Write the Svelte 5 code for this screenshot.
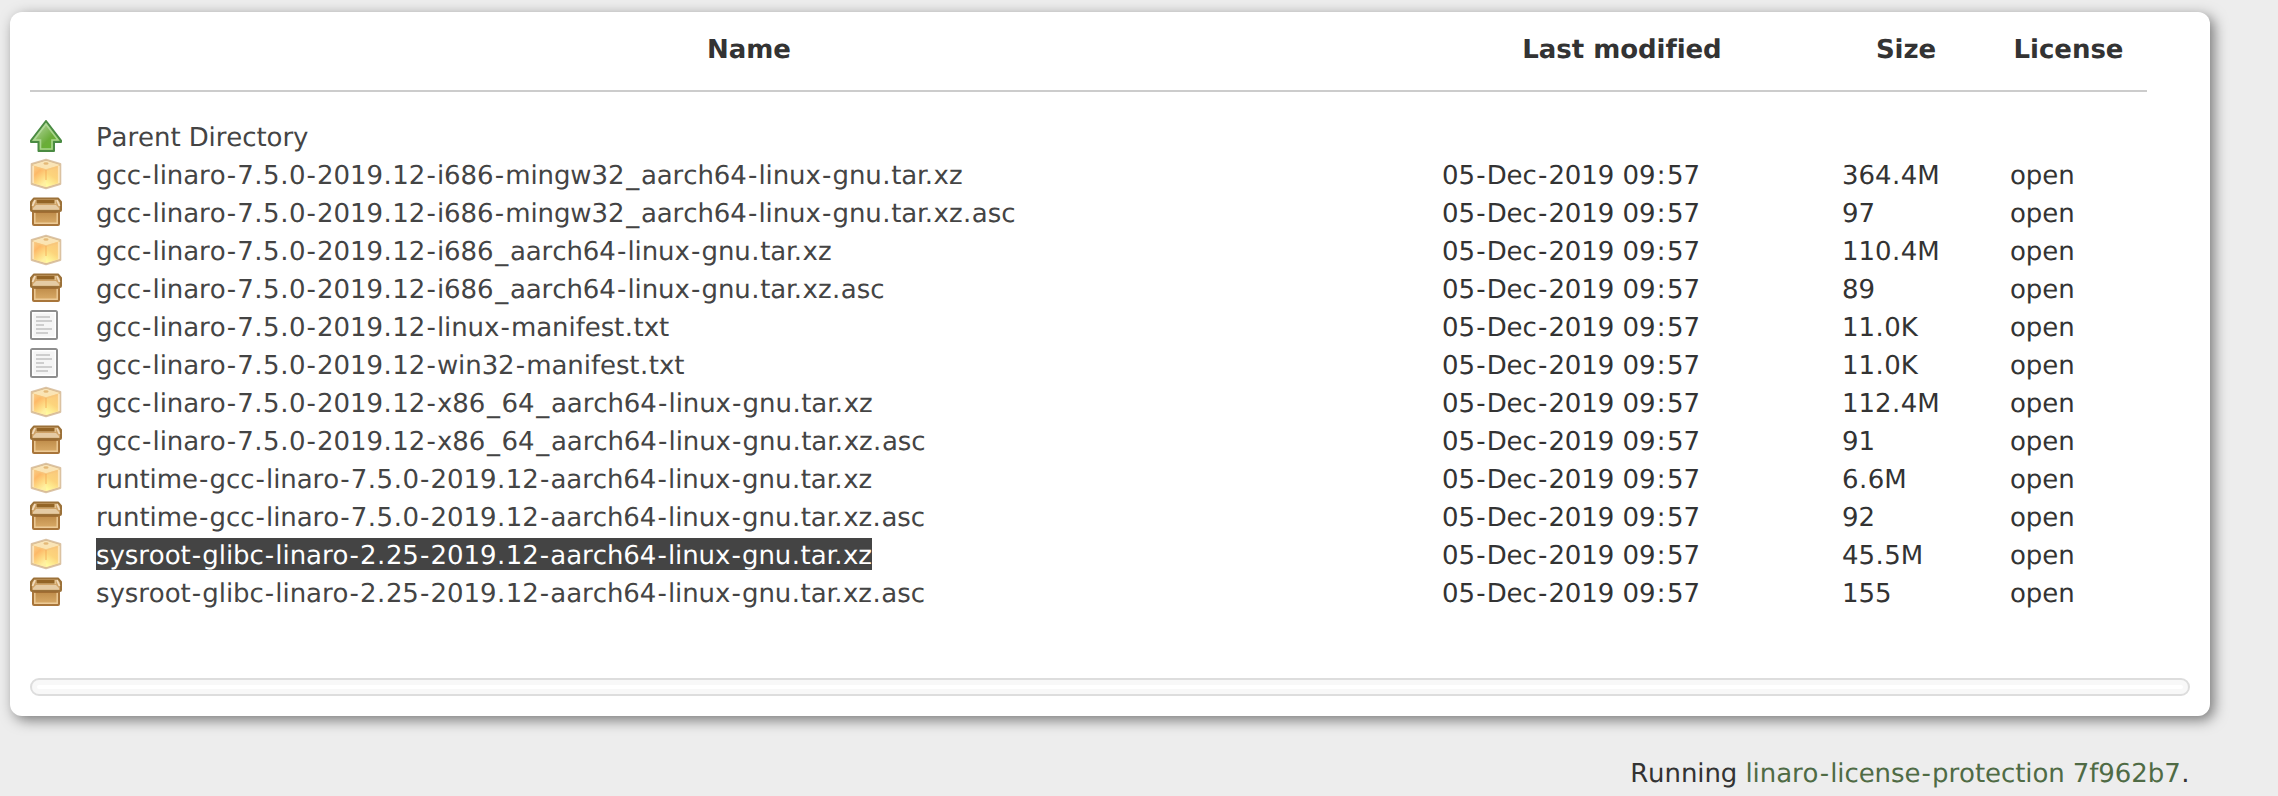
<script>
  const stamp = '05-Dec-2019 09:57';
  const rows = [
    { icon: 'up', name: 'Parent Directory', date: '', size: '', license: '' },
    { icon: 'cube', name: 'gcc-linaro-7.5.0-2019.12-i686-mingw32_aarch64-linux-gnu.tar.xz', date: stamp, size: '364.4M', license: 'open' },
    { icon: 'box', name: 'gcc-linaro-7.5.0-2019.12-i686-mingw32_aarch64-linux-gnu.tar.xz.asc', date: stamp, size: '97', license: 'open' },
    { icon: 'cube', name: 'gcc-linaro-7.5.0-2019.12-i686_aarch64-linux-gnu.tar.xz', date: stamp, size: '110.4M', license: 'open' },
    { icon: 'box', name: 'gcc-linaro-7.5.0-2019.12-i686_aarch64-linux-gnu.tar.xz.asc', date: stamp, size: '89', license: 'open' },
    { icon: 'text', name: 'gcc-linaro-7.5.0-2019.12-linux-manifest.txt', date: stamp, size: '11.0K', license: 'open' },
    { icon: 'text', name: 'gcc-linaro-7.5.0-2019.12-win32-manifest.txt', date: stamp, size: '11.0K', license: 'open' },
    { icon: 'cube', name: 'gcc-linaro-7.5.0-2019.12-x86_64_aarch64-linux-gnu.tar.xz', date: stamp, size: '112.4M', license: 'open' },
    { icon: 'box', name: 'gcc-linaro-7.5.0-2019.12-x86_64_aarch64-linux-gnu.tar.xz.asc', date: stamp, size: '91', license: 'open' },
    { icon: 'cube', name: 'runtime-gcc-linaro-7.5.0-2019.12-aarch64-linux-gnu.tar.xz', date: stamp, size: '6.6M', license: 'open' },
    { icon: 'box', name: 'runtime-gcc-linaro-7.5.0-2019.12-aarch64-linux-gnu.tar.xz.asc', date: stamp, size: '92', license: 'open' },
    { icon: 'cube', name: 'sysroot-glibc-linaro-2.25-2019.12-aarch64-linux-gnu.tar.xz', date: stamp, size: '45.5M', license: 'open', selected: true },
    { icon: 'box', name: 'sysroot-glibc-linaro-2.25-2019.12-aarch64-linux-gnu.tar.xz.asc', date: stamp, size: '155', license: 'open' }
  ];

  // Punctuation gets a little extra room on both sides; a dot after "r" is tucked in.
  const kinds = { '-': 'dash', '_': 'under', '.': 'dot', ':': 'colon' };
  const split = (s) => s.split(/([-_.:])/).filter((p) => p !== '');
</script>

{#snippet spaced(s)}{#each split(s) as part, i}{#if kinds[part]}<span class={kinds[part]} class:tuck={part === '.' && i > 0 && split(s)[i - 1].endsWith('r')}>{part}</span>{:else}{part}{/if}{/each}{/snippet}

{#snippet icon(kind)}
  <svg class="icon" viewBox="0 0 32 32" width="32" height="32" aria-hidden="true">
    {#if kind === 'up'}
      <path d="M16 1 L31 20.500 V22 H24 V31 H8.500 V22 H1 V20.500 Z" fill="url(#green)" stroke="#4a8b43" stroke-width="2" stroke-linejoin="round" />
      <path d="M16 4.200 L28 20 H22 V29 H10.500 V20 H4 Z" fill="none" stroke="#b4dc9c" stroke-width="1.600" stroke-opacity=".85" />
    {:else if kind === 'cube'}
      <path d="M16 1.800 L30.300 6 V26 L16 30.200 L1.700 26 V6 Z" fill="#fbe3b0" stroke="#cfb08a" stroke-width="2" stroke-linejoin="round" stroke-opacity=".75" />
      <path d="M3 7 L16 3 L29 7 L16 11.500 Z" fill="url(#cubeTop)" />
      <path d="M3 7.500 L16 11.500 V29 L3 25 Z" fill="url(#cubeLeft)" />
      <path d="M29 7.500 L16 11.500 V29 L29 25 Z" fill="url(#cubeRight)" />
      <path d="M3.500 8.500 L16 12 L28.500 8.500" fill="none" stroke="#f6c57c" stroke-width="1.800" stroke-opacity=".7" />
      <path d="M16 12 V22" stroke="#f5a650" stroke-width="2" stroke-opacity=".4" />
      <ellipse cx="16" cy="5.500" rx="2.600" ry="1.200" fill="#dfae66" fill-opacity=".8" />
      <path d="M3.200 8 V25 M28.800 8 V25" stroke="#fff0cf" stroke-width="1.800" stroke-opacity=".7" />
    {:else if kind === 'box'}
      <path d="M3 15 H29 V28 Q29 29 28 29 H4 Q3 29 3 28 Z" fill="url(#boxBody)" stroke="#a8753a" stroke-width="2" />
      <path d="M4.800 16 V27.200 H27.200 V16" fill="none" stroke="#edcb97" stroke-width="1.400" />
      <path d="M4 2.500 H28 L31 6 V14 Q31 15 30 15 H2 Q1 15 1 14 V6 Z" fill="url(#boxLid)" stroke="#9b7139" stroke-width="2" stroke-linejoin="round" />
      <path d="M5 4 L2.500 10 M27 4 L29.500 10" stroke="#f1dcbd" stroke-width="1.800" />
      <path d="M6 4 H26 V8 H6 Z" fill="#e4c28e" />
      <path d="M6.500 4 H24.500 V7.500 H6.500 Z" fill="#936426" />
      <path d="M3 12 L6 9 H26 L29 12 V13.800 H3 Z" fill="#e5cba4" />
      <path d="M4 16.200 H28" stroke="#9a672d" stroke-width="1.200" />
    {:else}
      <rect x="1" y="1" width="26" height="28" rx="1.500" fill="#f5f5f5" stroke="#8e8e8e" stroke-width="2" />
      <rect x="2.700" y="2.700" width="22.600" height="24.600" fill="none" stroke="#fff" stroke-width="1.400" />
      <path d="M6 7 H20 M6 11 H22 M6 15 H14 M6 19 H22 M6 23 H18" stroke="#cecece" stroke-width="1.900" />
    {/if}
  </svg>
{/snippet}

<svg class="defs" width="0" height="0" aria-hidden="true">
  <defs>
    <linearGradient id="green" x1="0" y1="0" x2="1" y2="1">
      <stop offset=".25" stop-color="#a3cc87" /><stop offset=".6" stop-color="#6bad3a" /><stop offset="1" stop-color="#62b827" />
    </linearGradient>
    <linearGradient id="cubeTop" x1="0" y1="0" x2="0" y2="1">
      <stop offset="0" stop-color="#f8e6bf" /><stop offset="1" stop-color="#fce3ac" />
    </linearGradient>
    <linearGradient id="cubeLeft" x1="0" y1="0" x2=".5" y2="1">
      <stop offset="0" stop-color="#fbcf8a" /><stop offset=".4" stop-color="#fdb968" /><stop offset=".75" stop-color="#fedb84" /><stop offset="1" stop-color="#fff0a0" />
    </linearGradient>
    <linearGradient id="cubeRight" x1=".7" y1="0" x2=".3" y2="1">
      <stop offset="0" stop-color="#fac97c" /><stop offset=".5" stop-color="#fcd47c" /><stop offset="1" stop-color="#fffb9e" />
    </linearGradient>
    <linearGradient id="boxBody" x1="0" y1="0" x2="0" y2="1">
      <stop offset="0" stop-color="#bd8a48" /><stop offset="1" stop-color="#dcae6b" />
    </linearGradient>
    <linearGradient id="boxLid" x1="0" y1="0" x2="0" y2="1">
      <stop offset="0" stop-color="#d3ab72" /><stop offset="1" stop-color="#c9985a" />
    </linearGradient>
  </defs>
</svg>

<div class="page">
  <main class="card">
    <div class="listing">
      <div class="row head">
        <span></span>
        <span>Name</span>
        <span>Last modified</span>
        <span>Size</span>
        <span>License</span>
      </div>
      <hr />
      {#each rows as r}
        <div class="row">
          {@render icon(r.icon)}
          <div class="cell"><span class="link" class:selected={r.selected}>{@render spaced(r.name)}</span></div>
          <div class="cell">{@render spaced(r.date)}</div>
          <div class="cell">{@render spaced(r.size)}</div>
          <div class="cell">{r.license}</div>
        </div>
      {/each}
    </div>
    <div class="bar"></div>
  </main>
  <footer>Running <span class="green">{@render spaced('linaro-license-protection 7f962b7')}</span>{@render spaced('.')}</footer>
</div>

<style>
  :global(body) {
    background: #ededed;
  }
  .defs {
    display: block;
  }
  .page {
    box-sizing: border-box;
    height: 796px;
    padding: 12px 68px 0 10px;
    overflow: hidden;
    background: #ededed;
    color: #333;
    font-family: Verdana, "DejaVu Sans", sans-serif;
    font-size: 26px;
    font-kerning: none;
    letter-spacing: -0.08px;
    text-rendering: geometricPrecision;
    white-space: nowrap;
  }
  .card {
    box-sizing: border-box;
    height: 704px;
    padding: 0 20px 20px;
    border-radius: 12px;
    background: #fff;
    box-shadow: 4px 4px 14px #777;
    display: flex;
    flex-direction: column;
    justify-content: space-between;
  }
  .listing {
    width: 2117px;
  }
  .row {
    display: grid;
    grid-template-columns: 26px 1306px 360px 128px 117px;
    column-gap: 40px;
    height: 38px;
  }
  .head {
    height: 78px;
    padding-top: 19px;
    box-sizing: border-box;
    line-height: 38px;
    font-weight: bold;
    text-align: center;
    letter-spacing: -0.05px;
  }
  hr {
    height: 2px;
    margin: 0 0 26px;
    border: 0;
    background: #ccc;
  }
  .icon {
    display: block;
    margin-top: 2px;
  }
  .cell {
    height: 32px;
    margin-top: 2px;
    line-height: 36px;
  }
  .link {
    display: block;
    width: fit-content;
    height: 32px;
    color: #444;
  }
  .selected {
    background: #444;
    color: #fff;
  }
  .dash {
    padding: 0 1.2px;
  }
  .under {
    padding: 0 1.750px;
  }
  .dot {
    padding: 0 0.600px;
  }
  .colon {
    padding: 0 1.500px;
  }
  .tuck {
    margin-left: -3.500px;
  }
  .bar {
    box-sizing: border-box;
    height: 18px;
    border: 2px solid #ddd;
    border-radius: 9px;
    background: #fff;
    box-shadow: inset 0 0 0 5px #f8f8f8;
  }
  footer {
    margin-top: 39px;
    padding-right: 20px;
    line-height: 38px;
    text-align: right;
  }
  .green {
    color: #4f6b45;
  }
</style>
